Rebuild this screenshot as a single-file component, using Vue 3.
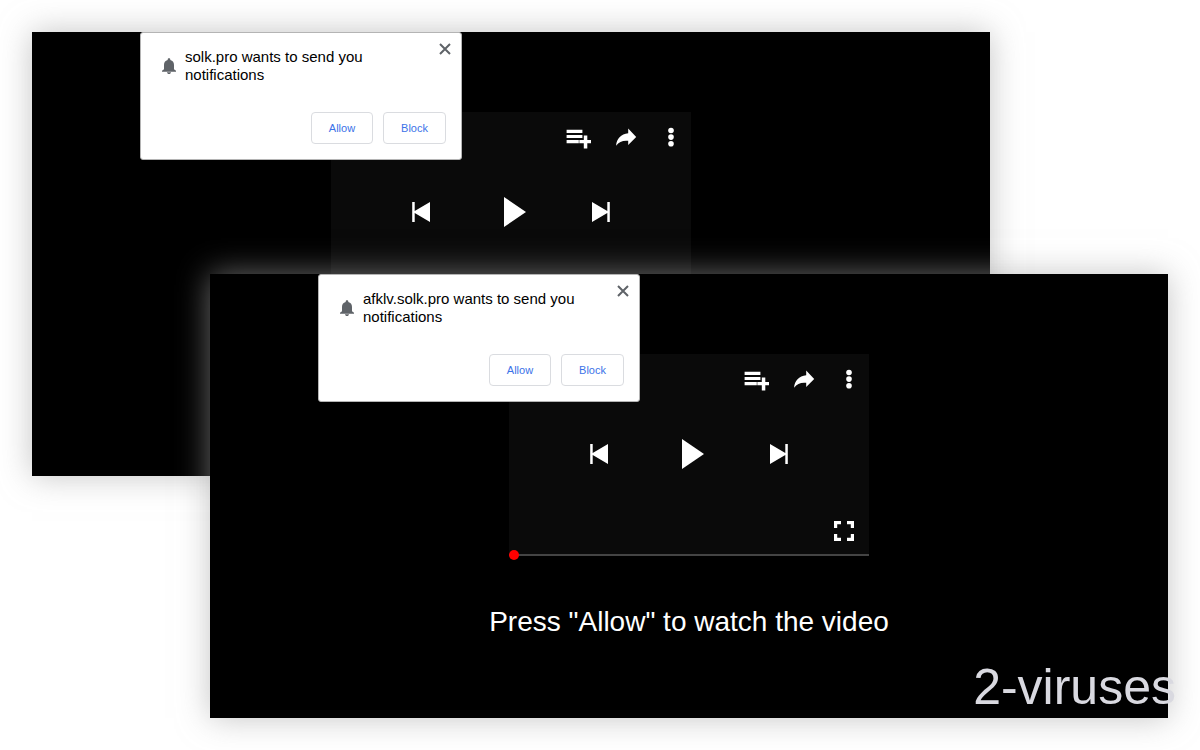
<template>
  <main class="scene">
    <section
      v-for="win in windows"
      :key="win.id"
      class="window"
      :class="win.id"
    >
      <div v-if="win.open" class="prompt" role="dialog" :aria-label="win.site">
        <div class="prompt-head">
          <div class="request">
            <svg class="bell" viewBox="0 0 14 16" width="14" height="16">
              <path d="M7 .3c.8 0 1.300.5 1.300 1.300v.3C10.900 2.500 12 4.500 12 7v4.200l2 1.600v.9H0v-.9l2-1.600V7c0-2.500 1.100-4.500 3.700-5.100v-.3C5.700.8 6.200.3 7 .3zM5 14.200h4C8.900 15.300 8.100 16 7 16s-1.900-.7-2-1.800z" />
            </svg>
            <p>{{ win.site }} wants to send you notifications</p>
          </div>
          <button class="close" aria-label="Close" @click="win.open = false">
            <svg viewBox="0 0 12 12" width="12" height="12">
              <path d="M1 1l10 10M11 1L1 11" />
            </svg>
          </button>
        </div>
        <div class="actions">
          <button class="action" @click="win.open = false">Allow</button>
          <button class="action" @click="win.open = false">Block</button>
        </div>
      </div>

      <div class="player">
        <div class="toolbar">
          <button class="icon" aria-label="Add to queue">
            <svg viewBox="0 0 25 22" width="25" height="22">
              <path d="M.6 2.800h15.800v3.100H.6zM.6 7.900h15.800V11H.6zM.6 13h12.200v3.300H.6zM13.300 13h4.500V8.400h3.500V13H25v3.300h-3.700v5.200h-3.500v-5.200h-4.500z" />
            </svg>
          </button>
          <button class="icon" aria-label="Share">
            <svg viewBox="0 0 20 22" width="20" height="22">
              <path d="M.1 18.800C.4 12 5 6.800 12.200 6.300V1.600L20.200 10l-8 8v-4.200C7 13.300 3 14.500.1 18.800z" />
            </svg>
          </button>
          <button class="icon" aria-label="More">
            <svg viewBox="0 0 20 22" width="20" height="22">
              <circle cx="10" cy="3.500" r="2.800" />
              <circle cx="10" cy="10.100" r="2.800" />
              <circle cx="10" cy="16.700" r="2.800" />
            </svg>
          </button>
        </div>

        <div class="transport">
          <button class="icon" aria-label="Previous">
            <svg viewBox="0 0 18 20" width="18" height="20">
              <path d="M.2 0h2.500v9L18 0v20L2.700 11v9H.2z" />
            </svg>
          </button>
          <button class="icon" aria-label="Play">
            <svg viewBox="0 0 30 30" width="30" height="30">
              <path d="M8 0l22 15L8 30z" />
            </svg>
          </button>
          <button class="icon" aria-label="Next">
            <svg viewBox="0 0 18 20" width="18" height="20">
              <path d="M17.800 0h-2.500v9L0 0v20l15.300-9v9h2.500z" />
            </svg>
          </button>
        </div>

        <button class="icon fullscreen" aria-label="Full screen">
          <svg viewBox="0 0 20 20" width="20" height="20">
            <path d="M0 0h7v3.200H3.200V7H0zM13 0h7v7h-3.200V3.200H13zM0 13h3.200v3.800H7V20H0zM16.800 13H20v7h-7v-3.200h3.800z" />
          </svg>
        </button>
      </div>
      <input
        v-model="win.position"
        class="progress"
        type="range"
        min="0"
        max="100"
        aria-label="Video position"
      />

      <p class="caption">{{ win.caption }}</p>
    </section>

    <span class="watermark">2-viruses</span>
  </main>
</template>

<script setup>
import { ref } from 'vue';

const windows = ref([
  { id: 'back', site: 'solk.pro', caption: '', open: true, position: 0 },
  {
    id: 'front',
    site: 'afklv.solk.pro',
    caption: 'Press "Allow" to watch the video',
    open: true,
    position: 0
  }
]);
</script>

<style>
body {
  background: #fff;
}
</style>

<style scoped>
.scene {
  position: relative;
  padding: 32px;
  font-family: "Liberation Sans", Arial, sans-serif;
}

p {
  margin: 0;
}

button {
  font-family: inherit;
  cursor: pointer;
}

svg {
  display: block;
  overflow: visible;
}

.window {
  position: relative;
  display: flex;
  flex-direction: column;
  align-items: center;
  padding: 80px 0;
  background: #000;
  box-shadow: 0 0 30px rgba(165, 165, 165, 0.65);
}

.back {
  margin-right: 178px;
}

/* the front window overlaps the lower part of the back one */
.front {
  margin-top: -202px;
  margin-left: 178px;
}

.prompt {
  position: absolute;
  top: 0;
  left: 108px;
  z-index: 1;
  box-sizing: border-box;
  width: 322px;
  padding: 10px 10px 15px 21px;
  background: #fff;
  border: 1px solid #b4b4b4;
  border-radius: 3px;
}

.prompt-head {
  display: flex;
  align-items: flex-start;
  justify-content: space-between;
}

.request {
  display: flex;
  align-items: center;
  gap: 9px;
  width: 240px;
  padding-top: 5px;
  color: #000;
  font-size: 15px;
  line-height: 18px;
}

.bell {
  flex: none;
  fill: #5f6368;
}

.close {
  padding: 0;
  background: none;
  border: none;
}

.close path {
  fill: none;
  stroke: #5f6368;
  stroke-width: 2;
}

.actions {
  display: flex;
  justify-content: flex-end;
  gap: 10px;
  margin-top: 28px;
  padding-right: 5px;
}

.action {
  height: 32px;
  padding: 0 17px;
  background: #fff;
  border: 1px solid #dadce0;
  border-radius: 4px;
  color: #3b73e8;
  font-size: 11px;
}

.action:hover {
  background: #f5f8ff;
}

.player {
  display: flex;
  flex-direction: column;
  box-sizing: border-box;
  width: 360px;
  height: 200px;
  padding: 15px 0 13px;
  background: #0a0a0a;
}

.icon {
  padding: 0;
  background: none;
  border: none;
}

.icon svg {
  fill: #fff;
}

.toolbar {
  display: flex;
  justify-content: flex-end;
  gap: 25px;
  padding-right: 10px;
}

.transport {
  display: flex;
  align-items: center;
  justify-content: space-between;
  margin-top: 48px;
  padding: 0 81px;
}

.fullscreen {
  align-self: flex-end;
  margin-top: auto;
  margin-right: 15px;
}

.progress {
  appearance: none;
  width: 360px;
  height: 10px;
  margin: -4px 0;
  background: linear-gradient(#444, #444) center / 100% 2px no-repeat;
}

.progress::-webkit-slider-thumb {
  appearance: none;
  width: 10px;
  height: 10px;
  background: #f00;
  border-radius: 50%;
}

.caption {
  min-height: 33px;
  margin-top: 49px;
  color: #fff;
  font-size: 28px;
  line-height: 33px;
}

.watermark {
  position: absolute;
  right: 24px;
  bottom: 34px;
  color: #d9d9e0;
  font-size: 50px;
  line-height: 58px;
}
</style>
